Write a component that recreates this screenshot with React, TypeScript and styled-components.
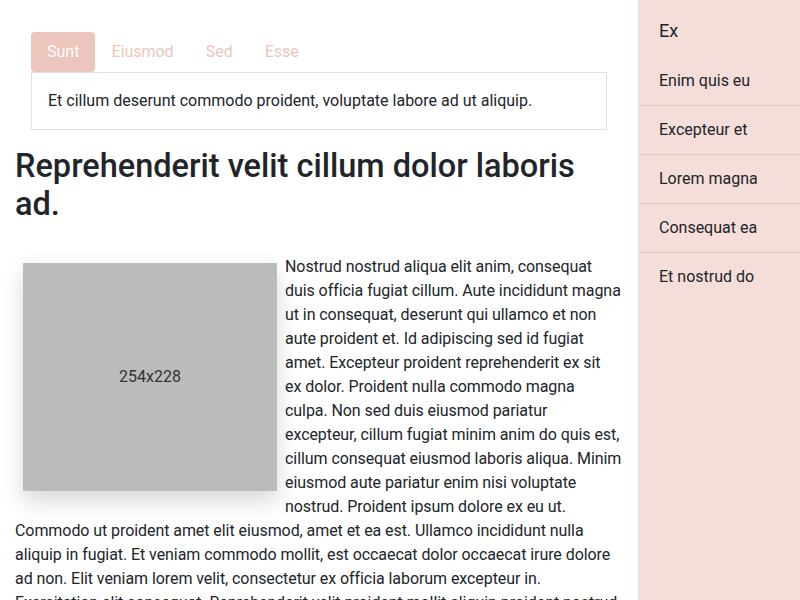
import React, { useState } from 'react';
import styled, { createGlobalStyle } from 'styled-components';

const GlobalStyle = createGlobalStyle`
  html, body {
    margin: 0;
    padding: 0;
  }
  body {
    font-family: Roboto, 'Liberation Sans', sans-serif;
    font-size: 16px;
    line-height: 24px;
    color: #212529;
    background: #fff;
  }
  * {
    box-sizing: border-box;
  }
`;

const tabs = [
    { title: 'Sunt', text: 'Et cillum deserunt commodo proident, voluptate labore ad ut aliquip.' },
    { title: 'Eiusmod', text: 'Velit esse culpa nisi, labore ullamco sunt anim.' },
    { title: 'Sed', text: 'Sed dolor nulla, commodo fugiat laborum ipsum.' },
    { title: 'Esse', text: 'Esse mollit irure aute, in ad do nostrud.' }
];

const links = ['Enim quis eu', 'Excepteur et', 'Lorem magna', 'Consequat ea', 'Et nostrud do'];

const Layout = styled.div`
    display: flex;
    min-height: 100vh;
    overflow: hidden;
`;

const Main = styled.main`
    width: 638px;
    flex-shrink: 0;
    padding: 32px 15px 0;
    height: 100vh;
    overflow: hidden;
`;

const TabsSection = styled.section`
    margin: 0 16px;
`;

const TabNav = styled.nav`
    display: flex;
`;

const Tab = styled.button<{ $active: boolean }>`
    border: 0;
    border-radius: 4px;
    padding: 8px 16px;
    font: inherit;
    line-height: 24px;
    cursor: pointer;
    background: ${({ $active }) => ($active ? '#ecc6bd' : 'transparent')};
    color: ${({ $active }) => ($active ? '#ffffff' : '#ecc6bd')};
`;

const TabPane = styled.div`
    border: 1px solid #dee2e6;
    padding: 16px;
`;

const Heading = styled.h2`
    font-size: 32.5px;
    line-height: 38px;
    font-weight: 500;
    margin: 17px 0 32px;
`;

const Article = styled.p`
    margin: 0;
    letter-spacing: -0.07px;
`;

const Placeholder = styled.div`
    float: left;
    width: 254px;
    height: 228px;
    margin: 8px;
    background: #bbbbbb;
    color: #333;
    letter-spacing: 0;
    display: flex;
    align-items: center;
    justify-content: center;
    box-shadow: 0 10px 22px rgba(0, 0, 0, 0.16);
`;

const Sidebar = styled.aside`
    flex: 1;
    background: #f5ddd9;
    border-left: 1px solid #dee2e6;
`;

const SidebarTitle = styled.div`
    font-size: 18px;
    line-height: 27px;
    padding: 17px 20px 13px;
`;

const SideList = styled.ul`
    list-style: none;
    margin: 0;
    padding: 0;
`;

const SideItem = styled.li`
    padding: 12px 20px;
    border-bottom: 1px solid #dbc5c1;

    &:last-child {
        border-bottom: 0;
    }
`;

export default function App() {
    const [active, setActive] = useState(0);

    return (
        <Layout>
            <GlobalStyle />
            <Main>
                <TabsSection>
                    <TabNav>
                        {tabs.map((t, i) => (
                            <Tab key={t.title} $active={i === active} onClick={() => setActive(i)}>
                                {t.title}
                            </Tab>
                        ))}
                    </TabNav>
                    <TabPane>{tabs[active].text}</TabPane>
                </TabsSection>
                <Heading>Reprehenderit velit cillum dolor laboris ad.</Heading>
                <Article>
                    <Placeholder>254x228</Placeholder>
                    Nostrud nostrud aliqua elit anim, consequat duis officia fugiat cillum. Aute incididunt magna
                    ut in consequat, deserunt qui ullamco et non aute proident et. Id adipiscing sed id fugiat amet.
                    Excepteur proident reprehenderit ex sit
                    <br />
                    ex dolor. Proident nulla commodo magna
                    <br />
                    culpa. Non sed duis eiusmod pariatur
                    <br />
                    excepteur, cillum fugiat minim anim do quis est, cillum consequat eiusmod laboris aliqua. Minim
                    <br />
                    eiusmod aute pariatur enim nisi voluptate
                    <br />
                    nostrud. Proident ipsum dolore ex eu ut.
                    <br />
                    Commodo ut proident amet elit eiusmod, amet et ea est. Ullamco incididunt nulla aliquip in
                    fugiat. Et veniam commodo mollit, est occaecat dolor occaecat irure dolore ad non. Elit veniam
                    lorem velit, consectetur ex officia laborum excepteur in. Exercitation elit consequat.
                    Reprehenderit velit proident mollit aliquip proident nostrud. Nisi dolore labore, elit ad sint
                    esse. Cillum ex minim sunt, laborum aute in irure.
                </Article>
            </Main>
            <Sidebar>
                <SidebarTitle>Ex</SidebarTitle>
                <SideList>
                    {links.map((l) => (
                        <SideItem key={l}>{l}</SideItem>
                    ))}
                </SideList>
            </Sidebar>
        </Layout>
    );
}
